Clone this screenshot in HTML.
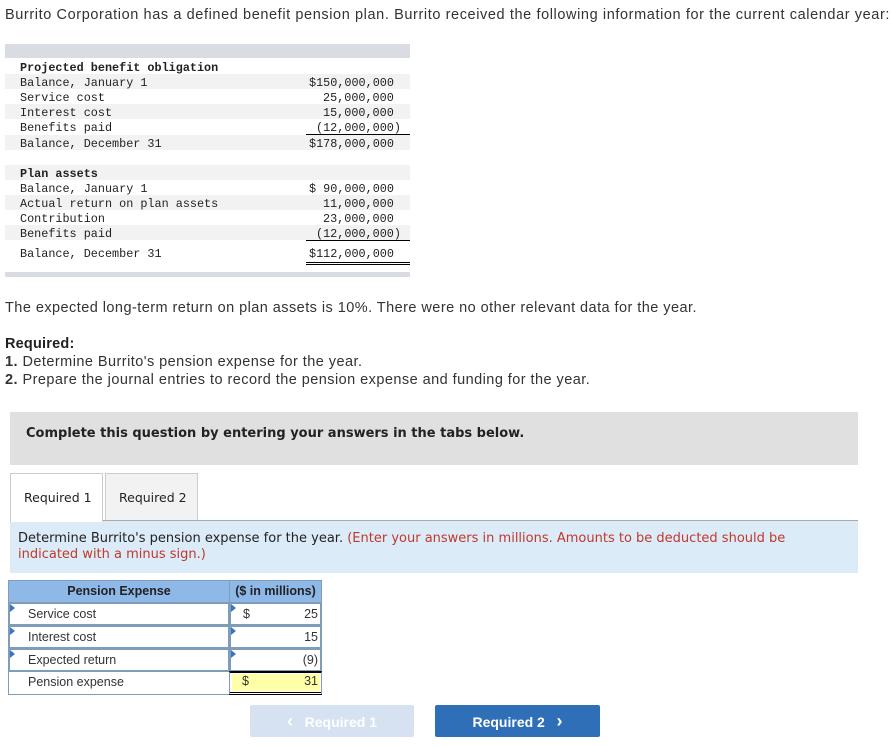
<!DOCTYPE html>
<html><head><style>
body{margin:0;width:893px;height:747px;background:#fff;position:relative;font-family:"Liberation Sans",Arial,sans-serif;color:#333;overflow:hidden}
.a{position:absolute;white-space:nowrap}
.t{font-size:14.5px;letter-spacing:0.45px}
.m{font-family:"Liberation Mono",monospace;font-size:11.8px;color:#222}
.r{position:absolute;left:5px;width:405px;height:15px}
.r span{top:2px}
.sh{background:#f2f2f2}
.dv{font-family:"DejaVu Sans",Verdana,sans-serif;font-size:12.5px}
.cell{position:absolute;border:1px solid #7f9db9;box-sizing:border-box;font-size:12.5px;line-height:21px}
.tri{position:absolute;left:0;top:0;width:0;height:0;border-top:4px solid transparent;border-bottom:4px solid transparent;border-left:5px solid #3a75c4}
</style></head><body>
<div class="a t" style="left:5px;top:7px;letter-spacing:0.6px">Burrito Corporation has a defined benefit pension plan. Burrito received the following information for the current calendar year:</div>

<div class="a" style="left:5px;top:44px;width:405px;height:14px;background:#d9dde3"></div>
<div class="r m" style="top:59px"><span class="a" style="left:15px;font-weight:bold">Projected benefit obligation</span></div>
<div class="r m sh" style="top:74px"><span class="a" style="left:15px">Balance, January 1</span><span class="a" style="left:304px">$150,000,000</span></div>
<div class="r m" style="top:89px"><span class="a" style="left:15px">Service cost</span><span class="a" style="left:318px">25,000,000</span></div>
<div class="r m sh" style="top:104px"><span class="a" style="left:15px">Interest cost</span><span class="a" style="left:318px">15,000,000</span></div>
<div class="r m" style="top:119px"><span class="a" style="left:15px">Benefits paid</span><span class="a" style="left:311px">(12,000,000)</span></div>
<div class="a" style="left:306px;top:134px;width:104px;border-top:1px solid #000;z-index:2"></div>
<div class="r m sh" style="top:135px"><span class="a" style="left:15px">Balance, December 31</span><span class="a" style="left:304px">$178,000,000</span></div>

<div class="r m sh" style="top:165px"><span class="a" style="left:15px;font-weight:bold">Plan assets</span></div>
<div class="r m" style="top:180px"><span class="a" style="left:15px">Balance, January 1</span><span class="a" style="left:304px">$ 90,000,000</span></div>
<div class="r m sh" style="top:195px"><span class="a" style="left:15px">Actual return on plan assets</span><span class="a" style="left:318px">11,000,000</span></div>
<div class="r m" style="top:210px"><span class="a" style="left:15px">Contribution</span><span class="a" style="left:318px">23,000,000</span></div>
<div class="r m sh" style="top:225px"><span class="a" style="left:15px">Benefits paid</span><span class="a" style="left:311px">(12,000,000)</span></div>
<div class="a" style="left:306px;top:240px;width:104px;border-top:1px solid #000;z-index:2"></div>
<div class="r m" style="top:245px"><span class="a" style="left:15px">Balance, December 31</span><span class="a" style="left:304px">$112,000,000</span></div>
<div class="a" style="left:306px;top:262px;width:104px;height:1px;border-top:1px solid #000;border-bottom:1px solid #000"></div>
<div class="a" style="left:5px;top:272px;width:405px;height:5px;background:#d9dde3"></div>

<div class="a t" style="left:5px;top:300px">The expected long-term return on plan assets is 10%. There were no other relevant data for the year.</div>
<div class="a t" style="left:5px;top:336px;font-weight:bold;color:#222;letter-spacing:0.2px">Required:</div>
<div class="a t" style="left:5px;top:354px"><b>1.</b> Determine Burrito's pension expense for the year.</div>
<div class="a t" style="left:5px;top:372px"><b>2.</b> Prepare the journal entries to record the pension expense and funding for the year.</div>

<div class="a" style="left:10px;top:412px;width:848px;height:53px;background:#e0e0e0"></div>
<div class="a dv" style="left:26px;top:426px;font-weight:bold;font-size:13px;color:#222">Complete this question by entering your answers in the tabs below.</div>

<div class="a" style="left:10px;top:473px;width:91px;height:48px;background:#fff;border:1px solid #ccc;border-bottom:none;z-index:2"></div>
<div class="a dv" style="left:24px;top:490px;z-index:3;color:#222">Required 1</div>
<div class="a" style="left:105px;top:473px;width:91px;height:46px;background:#f2f2f2;border:1px solid #ccc;border-bottom:none"></div>
<div class="a dv" style="left:119px;top:490px;color:#222">Required 2</div>
<div class="a" style="left:10px;top:520px;width:848px;height:52px;background:#dcebf8;border-top:1px solid #aaa"></div>
<div class="a dv" style="left:18px;top:531px;line-height:16px;color:#222;font-size:13px">Determine Burrito's pension expense for the year. <span style="color:#c0392b">(Enter your answers in millions. Amounts to be deducted should be<br>indicated with a minus sign.)</span></div>

<div class="a" style="left:8px;top:580px;width:314px;height:115px;border:1px solid #7f9db9;box-sizing:border-box"></div>
<div class="cell" style="left:8px;top:580px;width:222px;height:23px;background:#8eb8e8;text-align:center;font-weight:bold;color:#222">Pension Expense</div>
<div class="cell" style="left:229px;top:580px;width:93px;height:23px;background:#8eb8e8;text-align:center;font-weight:bold;color:#222">($ in millions)</div>

<div class="cell" style="left:8px;top:602px;width:222px;height:24px;border:2px solid #7f9db9;padding-left:18px"><div class="tri"></div>Service cost</div>
<div class="cell" style="left:229px;top:602px;width:93px;height:24px;border:2px solid #7f9db9"><div class="tri"></div><span class="a" style="left:12px">$</span><span class="a" style="right:2px">25</span></div>
<div class="cell" style="left:8px;top:625px;width:222px;height:24px;border:2px solid #7f9db9;padding-left:18px"><div class="tri"></div>Interest cost</div>
<div class="cell" style="left:229px;top:625px;width:93px;height:24px;border:2px solid #7f9db9"><div class="tri"></div><span class="a" style="right:2px">15</span></div>
<div class="cell" style="left:8px;top:648px;width:222px;height:24px;border:2px solid #7f9db9;padding-left:18px"><div class="tri"></div>Expected return</div>
<div class="cell" style="left:229px;top:648px;width:93px;height:24px;border:2px solid #7f9db9"><div class="tri"></div><span class="a" style="right:2px">(9)</span></div>
<div class="cell" style="left:8px;top:671px;width:222px;height:24px;padding-left:19px">Pension expense</div>
<div class="cell" style="left:229px;top:671px;width:93px;height:24px;border-top:2px solid #000;border-bottom:3px double #000"><div class="a" style="left:2px;top:1px;right:1px;height:17px;background:#ffffa8"></div><span class="a" style="left:12px;top:-2px">$</span><span class="a" style="right:3px;top:-2px">31</span></div>

<div class="a" style="left:250px;top:705px;width:164px;height:32px;background:#d6e2f1;border-radius:2px;color:#fff;font-weight:bold;font-size:14px;line-height:32px;text-align:center"><span style="font-size:18px">&lsaquo;</span>&nbsp;&nbsp; Required 1</div>
<div class="a" style="left:435px;top:705px;width:165px;height:32px;background:#2f6fb7;border-radius:2px;color:#fff;font-weight:bold;font-size:14px;line-height:32px;text-align:center">Required 2 &nbsp;&nbsp;<span style="font-size:18px">&rsaquo;</span></div>
</body></html>
